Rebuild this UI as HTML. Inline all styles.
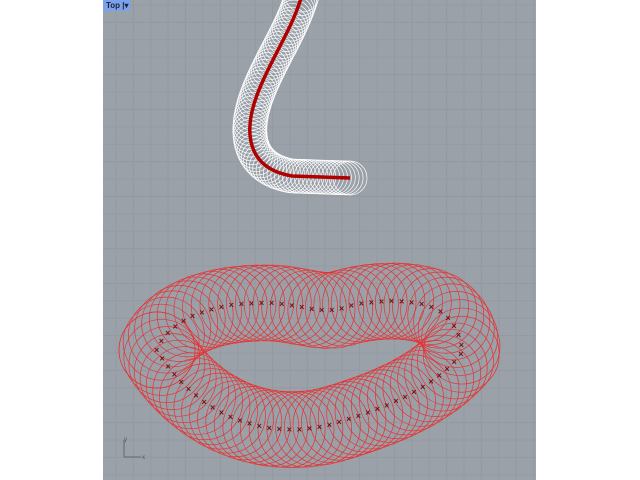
<!DOCTYPE html>
<html><head><style>
html,body{margin:0;padding:0;background:#fff;width:640px;height:480px;overflow:hidden;font-family:"Liberation Sans",sans-serif}
#vp{position:absolute;left:103px;top:0;width:433px;height:480px;background:#9ba1a9;overflow:hidden}
#lab{position:absolute;left:103px;top:0;width:27px;height:11px;background:#7aa2ee;font-size:8px;font-weight:bold;color:#223;line-height:11px;padding-left:3px;box-sizing:border-box}
</style></head><body>
<div id="vp"><svg id="s" width="433" height="480" viewBox="103 0 433 480"></svg></div>
<div id="lab">Top&nbsp;|▾</div>
<script>
var s=document.getElementById('s'),NS='http://www.w3.org/2000/svg',h='';
for(var x=116-17.4*2;x<540;x+=17.4)h+='<line x1="'+x+'" y1="0" x2="'+x+'" y2="480" stroke="#939aa2" stroke-width="1"/>';
for(var y=5;y<480;y+=17.4)h+='<line x1="100" y1="'+y+'" x2="540" y2="'+y+'" stroke="#939aa2" stroke-width="1"/>';
h+='<line x1="124" y1="440" x2="124" y2="457" stroke="#666" /><line x1="124" y1="457" x2="141" y2="457" stroke="#666"/>';
h+='<text x="124" y="441" font-size="6" fill="#555">y</text><text x="142" y="459" font-size="6" fill="#555">x</text>';
s.innerHTML=h;
function tube(d,r,n,col,cc,dot){
 var p=document.createElementNS(NS,'path');p.setAttribute('d',d);p.setAttribute('fill','none');s.appendChild(p);
 var L=p.getTotalLength(),o='';
 for(var i=0;i<=n;i++){var q=p.getPointAtLength(L*i/n);o+='<circle cx="'+q.x+'" cy="'+q.y+'" r="'+r+'" fill="none" stroke="'+col+'" stroke-width="0.7"/>';}
 var g=document.createElementNS(NS,'g');g.innerHTML=o;s.appendChild(g);
 p.setAttribute('stroke',cc);p.setAttribute('stroke-width',dot?0:3.5);s.appendChild(p);
 if(dot){var o2='';for(var i=0;i<dot;i++){var q=p.getPointAtLength(L*i/dot);o2+='<text x="'+(q.x-3)+'" y="'+(q.y+3)+'" font-size="9" font-weight="bold" fill="#7a1010">×</text>';}var g2=document.createElementNS(NS,'g');g2.innerHTML=o2;s.appendChild(g2);}
}
tube('M302,-5 C292,30 270,60 257,95 C244,130 245,168 292,176 L350,178',17,70,'#ffffff','#b00000',0);
tube('M157,350 C172,315 220,302 270,303 C300,304 320,314 340,309 C370,299 418,297 442,312 C456,323 461,338 463,352 C440,382 400,405 330,425 C270,440 200,420 157,350 Z',38,80,'#e83030','',70);
</script>
</body></html>
